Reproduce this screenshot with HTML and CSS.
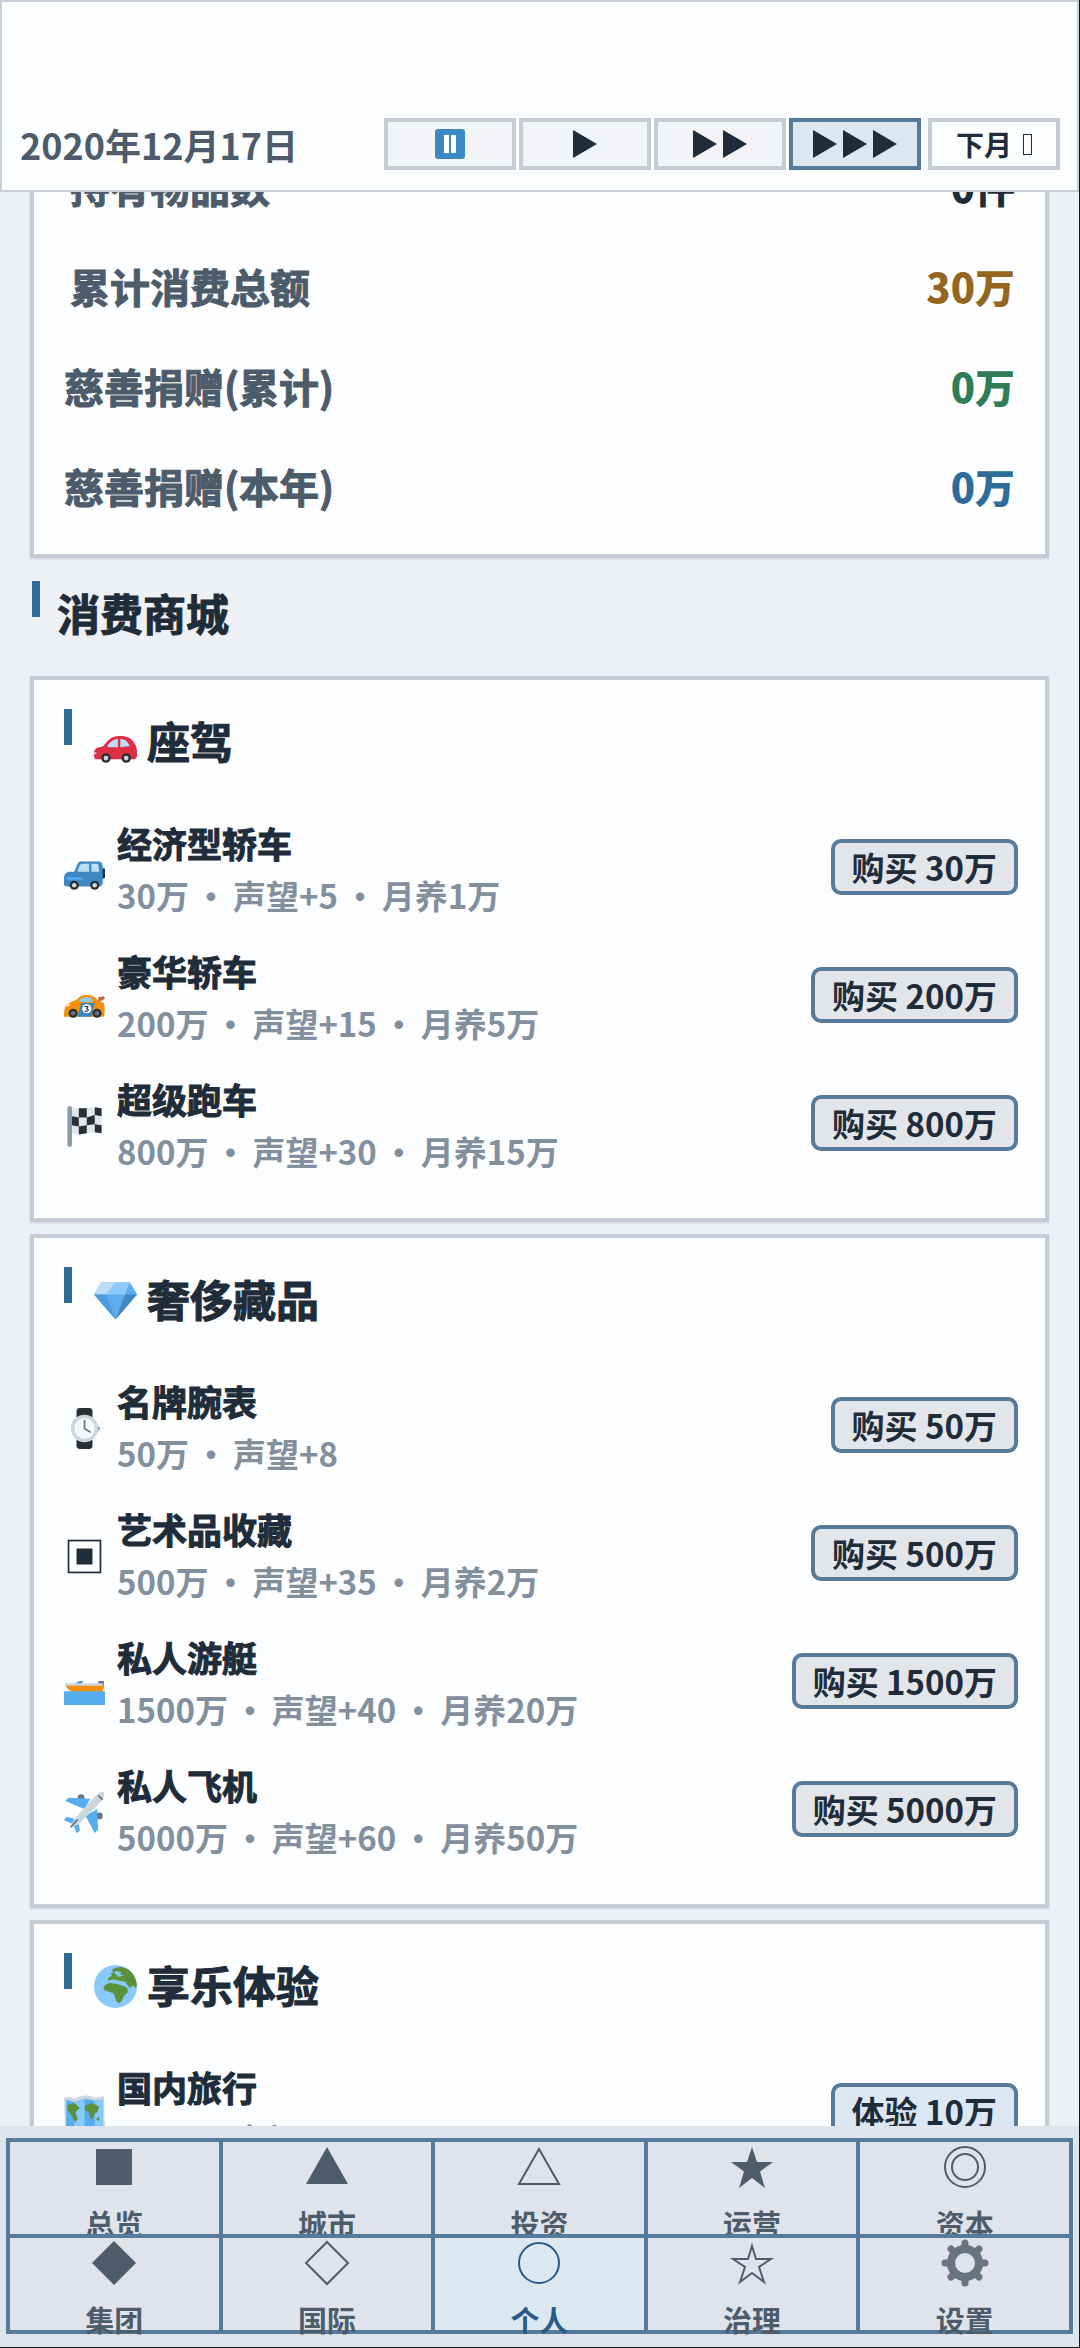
FILE: index.html
```html
<!DOCTYPE html>
<html lang="zh-CN">
<head>
  <meta charset="UTF-8" />
  <meta name="viewport" content="width=device-width, initial-scale=1" />
  <title>个人</title>
  <link rel="stylesheet" href="styles.css">
</head>
<body>
  <header class="topbar">
    <div class="date">2020年12月17日</div>
    <div class="speed">
      <button aria-label="暂停"><svg width="30" height="30" viewBox="0 0 30 30"><rect width="30" height="30" rx="3" fill="#3b88c3"/><path d="M9 6h5v18H9zM16 6h5v18h-5z" fill="#fff"/></svg></button>
      <button aria-label="播放"><svg width="24" height="28" viewBox="0 0 24 28"><path d="M0 0l24 14L0 28z"/></svg></button>
      <button aria-label="快进"><svg width="54" height="28" viewBox="0 0 54 28"><path d="M0 0l24 14L0 28zM30 0l24 14-24 14z"/></svg></button>
      <button class="active" aria-label="最快"><svg width="84" height="28" viewBox="0 0 84 28"><path d="M0 0l24 14L0 28zM30 0l24 14-24 14zM60 0l24 14-24 14z"/></svg></button>
      <button class="next">下月<span class="box"></span></button>
    </div>
  </header>

  <main class="content">
    <section class="card stats">
      <div class="stat indent"><span>持有物品数</span><b>0件</b></div>
      <div class="stat indent"><span>累计消费总额</span><b class="gold">30万</b></div>
      <div class="stat"><span>慈善捐赠(累计)</span><b class="green">0万</b></div>
      <div class="stat"><span>慈善捐赠(本年)</span><b class="blue">0万</b></div>
    </section>

    <h2 class="title page-title">消费商城</h2>

    <section class="card">
      <h3 class="title">
        <svg class="title-icon" viewBox="0 0 36 36">
          <path d="M1 32c-1-1-1-3-1-5 0-3 2-5 5-5l3-1c3-4 5-7 10-8 7-1 13 0 16 6 2 2 2 6 2 9 0 2 0 3-2 4z" fill="#dd2e44"/>
          <path d="M11 21c2-3 4-5 8-6h1v7h-8zM22 15c4 0 6 2 8 6l-8 1z" fill="#bbddf5"/>
          <path d="M0 26h2v2H0z" fill="#f4abba"/>
          <g fill="#292f33"><circle cx="10" cy="31" r="4"/><circle cx="27" cy="31" r="4"/></g>
          <g fill="#ccd6dd"><circle cx="10" cy="31" r="2"/><circle cx="27" cy="31" r="2"/></g>
        </svg>
        座驾
      </h3>
      <div class="item">
        <svg class="item-icon" viewBox="0 0 36 36">
          <rect x="33" y="16" width="3" height="9" rx="1" fill="#292f33"/>
          <path d="M0 31v-6c0-4 2-6 5-6h4l3-7c1-2 2-2 4-2h14c3 0 4 2 4 5v15l-2 2H2z" fill="#3b88c3"/>
          <path d="M12 18l2-5 2-1h6v7H12zM24 12h6l1 7h-7z" fill="#bbddf5"/>
          <path d="M2 24h14v2H2z" fill="#55acee"/>
          <g fill="#292f33"><circle cx="9" cy="31" r="4"/><circle cx="27" cy="31" r="4"/></g>
          <g fill="#ccd6dd"><circle cx="9" cy="31" r="2"/><circle cx="27" cy="31" r="2"/></g>
        </svg>
        <div class="info"><div class="name">经济型轿车</div><div class="desc">30万 <span>•</span> 声望+5 <span>•</span> 月养1万</div></div>
        <button class="buy">购买 30万</button>
      </div>
      <div class="item">
        <svg class="item-icon" viewBox="0 0 36 36">
          <path d="M30 17l5-1 1 2-3 2-3 1z" fill="#c1694f"/>
          <path d="M0 34c0-6 1-11 4-12l7-3c3-3 5-4 9-4 5 0 7 1 10 5l5 2c1 4 1 9 0 12z" fill="#f4900c"/>
          <path d="M13 20c2-2 4-3 7-3h4l1 4H13z" fill="#8ccaf7"/>
          <path d="M15 22h12l-3 12H12z" fill="#3b88c3"/>
          <circle cx="20" cy="27" r="4" fill="#fff"/>
          <path d="M18 25h3l-1 2c2 0 2 3-2 2" fill="none" stroke="#292f33"/>
          <path d="M2 23l4-1-2 3H2z" fill="#ffe8b6"/>
          <g fill="#292f33"><circle cx="8" cy="31" r="4"/><circle cx="29" cy="31" r="4"/></g>
          <g fill="#66757f"><circle cx="8" cy="31" r="2"/><circle cx="29" cy="31" r="2"/></g>
        </svg>
        <div class="info"><div class="name">豪华轿车</div><div class="desc">200万 <span>•</span> 声望+15 <span>•</span> 月养5万</div></div>
        <button class="buy">购买 200万</button>
      </div>
      <div class="item">
        <svg class="item-icon" viewBox="0 0 36 36">
          <path d="M5 36c-1 0-2-1-2-2V2a2 2 0 0 1 4 0v32c0 1-1 2-2 2z" fill="#8899a6"/>
          <path d="M7 1c9 3 15-1 26 1v22c-10-2-17 2-26 0z" fill="#e1e8ed"/>
          <path d="M13 2h7v8h-7zM27 1l6 1v7l-6-1zM7 9l6 1v8l-6-1zM20 10l7-2v8l-7 1zM13 18l7-1v7l-7 1zM27 16l6 1v7l-6-1z" fill="#292f33"/>
        </svg>
        <div class="info"><div class="name">超级跑车</div><div class="desc">800万 <span>•</span> 声望+30 <span>•</span> 月养15万</div></div>
        <button class="buy">购买 800万</button>
      </div>
    </section>

    <section class="card">
      <h3 class="title">
        <svg class="title-icon" viewBox="0 0 36 36">
          <path d="M6 3h24l6 10-18 21L0 13z" fill="#5dadec"/>
          <path d="M6 3l4 10H0zM6 3h12l-8 10z" fill="#bdddf4"/>
          <path d="M18 3h12l-4 10H10z" fill="#8ccaf7"/>
          <path d="M30 3l6 10H26z" fill="#5dadec"/>
          <path d="M0 13h10l8 21z" fill="#4b9be0"/>
          <path d="M36 13H26l-8 21z" fill="#4289c1"/>
        </svg>
        奢侈藏品
      </h3>
      <div class="item">
        <svg class="item-icon" viewBox="0 0 36 36">
          <path d="M11 8V3q0-3 3-3h8q3 0 3 3v5zM11 28v5q0 3 3 3h8q3 0 3-3v-5z" fill="#292f33"/>
          <path d="M29 15l3 3-3 3z" fill="#8899a6"/>
          <circle cx="18" cy="18" r="12" fill="#ccd6dd"/>
          <circle cx="18" cy="18" r="9" fill="#f5f8fa"/>
          <path d="M18 11v7l5 3" fill="none" stroke="#66757f" stroke-width="1.5" stroke-linecap="round"/>
        </svg>
        <div class="info"><div class="name">名牌腕表</div><div class="desc">50万 <span>•</span> 声望+8</div></div>
        <button class="buy">购买 50万</button>
      </div>
      <div class="item">
        <svg class="item-icon" viewBox="0 0 36 36">
          <rect x="4" y="4" width="28" height="28" fill="none" stroke="#1f2d3a" stroke-width="1.5"/>
          <rect x="11" y="11" width="14" height="14" fill="#1f2d3a"/>
        </svg>
        <div class="info"><div class="name">艺术品收藏</div><div class="desc">500万 <span>•</span> 声望+35 <span>•</span> 月养2万</div></div>
        <button class="buy">购买 500万</button>
      </div>
      <div class="item">
        <svg class="item-icon" viewBox="0 0 36 36">
          <path d="M9 18c2-2 4-3 8-3l-3 4z" fill="#4289c1"/>
          <path d="M30 15h5v4l-1 6h-2l-1-6z" fill="#66757f"/>
          <path d="M1 18h34l-1 7H8q-5-2-7-7z" fill="#f4900c"/>
          <path d="M1 17h33v2H2z" fill="#ccd6dd"/>
          <path d="M0 24h36v12H0z" fill="#55acee"/>
        </svg>
        <div class="info"><div class="name">私人游艇</div><div class="desc">1500万 <span>•</span> 声望+40 <span>•</span> 月养20万</div></div>
        <button class="buy">购买 1500万</button>
      </div>
      <div class="item">
        <svg class="item-icon" viewBox="0 0 36 36">
          <g fill="#66757f"><circle cx="15" cy="5" r="3"/><circle cx="31" cy="21" r="3"/></g>
          <path d="M23 6L4 5 1 8l17 7zM29 15l1 18-3 3-8-15zM8 23l-6-1-2 3 8 3 3 8 3-2-1-6z" fill="#55acee"/>
          <path d="M35 0c1 2 0 6-4 10L13 28l-8 4 4-8L26 5c4-4 7-6 9-5z" fill="#ccd6dd"/>
          <path d="M30 3l4 4M12 24l-6 7" fill="none" stroke="#66757f" stroke-width="1.5"/>
        </svg>
        <div class="info"><div class="name">私人飞机</div><div class="desc">5000万 <span>•</span> 声望+60 <span>•</span> 月养50万</div></div>
        <button class="buy">购买 5000万</button>
      </div>
    </section>

    <section class="card">
      <h3 class="title">
        <svg class="title-icon" viewBox="0 0 36 36">
          <circle cx="18" cy="18" r="18" fill="#88c9f9"/>
          <path d="M8 20c0-3 3-5 6-5 3 1 6 0 8 2l4 1c2 1 3 3 2 5l-3 3c-1 3-2 5-4 6-3-1-3-4-4-7-1-3-6-2-9-5z" fill="#5c913b"/>
          <path d="M15 4c5-3 9-3 14 0 4 3 6 7 7 13-1 3-2 2-3 0l-3 2c-2-1-2-3-4-5l-6-1-3-1-5 1c-1-2 1-3 3-4l-1-2 3-1 1 2 3-1-1-2-4 1z" fill="#5c913b"/>
          <path d="M18 5l5 1-1 2 3 1-5 1z" fill="#88c9f9"/>
        </svg>
        享乐体验
      </h3>
      <div class="item">
        <svg class="item-icon" viewBox="0 0 36 36">
          <path d="M0 3q6-1 9 1 9-5 18-1l8-1 1 29q-5-1-9 2-9-4-18 1-4-3-8 0z" fill="#ccd6dd"/>
          <path d="M2 5l7 2 9-3 9 2 7-1v25l-7 1-9-3-9 4-7-1z" fill="#55acee"/>
          <path d="M9 7l9-3v24l-9 4zM27 6l7-1v25l-7 1z" fill="#88c9f9"/>
          <path d="M3 10l6-2 5 4-4 4 2 6-2 3-3-6-4-5zM19 10l5-2 7 3-2 5-2 1-2 5-2-1-1-5-4-2zM28 22l3-2v4z" fill="#5c913b"/>
        </svg>
        <div class="info"><div class="name">国内旅行</div><div class="desc">10万 <span>•</span> 声望+1</div></div>
        <button class="buy try">体验 10万</button>
      </div>
    </section>
  </main>

  <nav class="tabs">
    <button><svg viewBox="0 0 48 48"><path d="M6 6h36v36H6z"/></svg>总览</button>
    <button><svg viewBox="0 0 48 48"><path d="M24 4l21 37H3z"/></svg>城市</button>
    <button><svg class="line" viewBox="0 0 48 48"><path d="M24 6l20 35H4z"/></svg>投资</button>
    <button><svg viewBox="0 0 48 48"><path d="M24 4l5 15h16L32 28.500l5 16.500-13-10-13 10 5-16.500L3 19h16z"/></svg>运营</button>
    <button><svg class="line" viewBox="0 0 48 48"><circle cx="24" cy="24" r="20"/><circle cx="24" cy="24" r="13"/></svg>资本</button>
    <button><svg viewBox="0 0 48 48"><path d="M24 2l22 22-22 22L2 24z"/></svg>集团</button>
    <button><svg class="line" viewBox="0 0 48 48"><path d="M24 3l21 21-21 21L3 24z"/></svg>国际</button>
    <button class="active"><svg class="line" viewBox="0 0 48 48"><circle cx="24" cy="24" r="20"/></svg>个人</button>
    <button><svg class="line" viewBox="0 0 48 48"><path d="M24 7l4 13h15L31 28l5 15-12-9-12 9 5-15L5 20h15z"/></svg>治理</button>
    <button><svg class="gear" viewBox="0 0 48 48"><circle cx="24" cy="24" r="14" fill="none" stroke-width="8"/><path d="M24 9V4M24 39v5M9 24H4M39 24h5M13 13l-3-3M35 35l3 3M35 13l3-3M13 35l-3 3" stroke-width="7" stroke-linecap="round"/></svg>设置</button>
  </nav>
</body>
</html>
```

FILE: styles.css
```css
* { box-sizing: border-box; }

body {
  margin: 0;
  height: 100vh;
  overflow: hidden;
  background: #edf0f5;
  color: #1f2d3a;
  font-family: "Noto Sans CJK SC", sans-serif;
  font-weight: 700;
  border-right: 1px solid #14181c;
}

button {
  font-family: inherit;
  font-weight: 700;
  color: inherit;
  padding: 0;
  cursor: pointer;
}

/* top bar */
.topbar {
  position: fixed;
  top: 0;
  left: 0;
  right: 1px;
  z-index: 10;
  height: 192px;
  padding: 0 17px 20px 18px;
  display: flex;
  justify-content: space-between;
  align-items: flex-end;
  background: #fcfdff;
  border: 2px solid #c5ced9;
}
.date {
  font-size: 36px;
  line-height: 52px;
  color: #4d5c6b;
}
.speed {
  display: flex;
  gap: 3px;
}
.speed button {
  display: flex;
  justify-content: center;
  align-items: center;
  width: 132px;
  height: 52px;
  background: #f2f4f7;
  border: 4px solid #c4ccd6;
  font-size: 28px;
}
.speed svg { fill: #1f2d3a; }
.speed .active {
  background: #dbe7f2;
  border-color: #557a9a;
}
.speed .next {
  margin-left: 4px;
  background: #fcfdff;
}
.box {
  width: 9px;
  height: 21px;
  margin-left: 11px;
  border: 1px solid #1f2d3a;
}

/* content */
.content {
  padding: 103px 30px 0;
}
.card {
  margin-bottom: 12px;
  padding: 29px 30px 30px;
  background: #fcfdff;
  border: 4px solid #c4ccd6;
  box-shadow: 0 1px 2px rgba(31, 45, 58, 0.15);
}
.stats {
  margin-bottom: 23px;
  padding-bottom: 18px;
}
.stat {
  display: flex;
  justify-content: space-between;
  padding: 30px 0;
  font-size: 40px;
  line-height: 40px;
  color: #4d5c6b;
}
.indent span { padding-left: 6px; }
.stat b { color: #1f2d3a; }
.stat .gold { color: #946620; }
.stat .green { color: #2f7d57; }
.stat .blue { color: #2f6c97; }

/* thin outline thickens the small cjk strokes */
.stat span, .title, .name {
  -webkit-text-stroke: 1px currentColor;
}

.title {
  display: flex;
  align-items: center;
  position: relative;
  margin: 0 0 33px;
  padding-left: 30px;
  font-size: 43px;
  line-height: 62px;
}
.title::before {
  content: "";
  position: absolute;
  top: 0;
  left: 0;
  width: 8px;
  height: 36px;
  background: #2f6c97;
}
.page-title {
  margin-left: 2px;
  padding-left: 25px;
}
.title-icon {
  width: 43px;
  height: 43px;
  margin: 4px 10px 0 0;
}

.item {
  display: flex;
  align-items: center;
  margin-right: -3px;
  padding: 13px 0 11px;
}
.item-icon {
  width: 41px;
  height: 41px;
  margin: 2px 12px 0 0;
}
.info { flex: 1; }
.name, .desc {
  font-size: 35px;
  line-height: 52px;
}
.desc {
  font-size: 33px;
  color: #82909e;
}
.desc span { margin: 0 -2px; }
.buy {
  height: 56px;
  margin-bottom: 4px;
  padding: 0 17px;
  background: #e2e6eb;
  border: 4px solid #557a9a;
  border-radius: 10px;
  font-size: 33px;
  line-height: 48px;
}
.try { background: #dbe7f2; }

/* bottom tabs */
.tabs {
  position: fixed;
  left: 0;
  right: 1px;
  bottom: 0;
  z-index: 10;
  display: grid;
  grid-template-columns: repeat(5, 1fr);
  padding: 12px 10px 17px 6px;
  background: #dfe4ec;
  border-bottom: 1px solid #14181c;
}
.tabs button {
  display: flex;
  flex-direction: column;
  align-items: center;
  justify-content: flex-start;
  height: 100px;
  margin: 0 -4px -4px 0;
  background: #dfe4ec;
  border: 4px solid #557a9a;
  color: #4d5c6b;
  font-size: 29px;
  line-height: 44px;
}
.tabs .active {
  background: #dbe8f2;
  color: #285a87;
}
.tabs svg {
  flex: none;
  width: 48px;
  height: 48px;
  margin: 1px 0 10px;
  fill: currentColor;
}
.tabs .line {
  fill: none;
  stroke: currentColor;
  stroke-width: 2;
}
.tabs .gear { stroke: #66757f; }
```
